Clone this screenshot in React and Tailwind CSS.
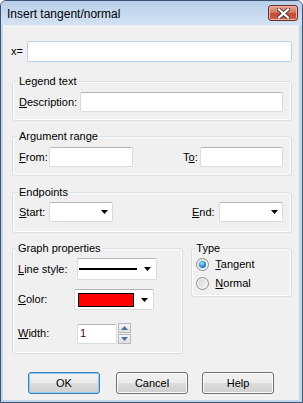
import React from "react";

const inputBox =
  "bg-white border border-[#d8dbe0] border-t-[#b3b6bd] rounded-[2px]";

function Arrow() {
  return (
    <svg width="7" height="4" viewBox="0 0 7 4" className="shrink-0">
      <polygon points="0,0 7,0 3.5,4" fill="#000" />
    </svg>
  );
}

function Combo({ className, children, arrowPad = "pr-[4px]" }) {
  return (
    <div className={`${inputBox} flex items-center ${arrowPad} ${className}`}>
      <div className="flex-1 flex items-center">{children}</div>
      <Arrow />
    </div>
  );
}

function Group({ title, className, children }) {
  return (
    <fieldset
      className={`border border-[#d5dfe5] rounded-[3px] shadow-[inset_0_0_0_1px_#ffffff] ${className}`}
    >
      <legend className="bg-[#f0f0f0] px-[1px] -ml-[1px] leading-[13px]">{title}</legend>
      {children}
    </fieldset>
  );
}

function Radio({ checked, children }) {
  return (
    <div className="flex items-center h-[13px]">
      <div className="w-[13px] h-[13px] rounded-full border border-[#8e8f8f] bg-[linear-gradient(135deg,#d2d2d2,#f8f8f8)] flex items-center justify-center shadow-[inset_0_0_0_1px_#f4f4f4]">
        {checked && (
          <div className="w-[7px] h-[7px] rounded-full bg-[radial-gradient(circle_at_40%_35%,#a6e4ff,#2c86c8_55%,#104a86)]" />
        )}
      </div>
      <span className="ml-[6px]">{children}</span>
    </div>
  );
}

function Button({ children, primary, className }) {
  return (
    <div
      className={`w-[72px] h-[22px] rounded-[3px] border flex items-center justify-center bg-[linear-gradient(#f2f2f2_0%,#ebebeb_50%,#dddddd_50%,#cfcfcf_100%)] ${
        primary
          ? "border-[#3c7fb1] shadow-[inset_0_0_0_1px_#8fd0f4]"
          : "border-[#707070] shadow-[inset_0_0_0_1px_#fbfbfb]"
      } ${className}`}
    >
      {children}
    </div>
  );
}

function SpinBtn({ up }) {
  return (
    <div className="w-[13px] h-[10px] border border-[#b5b8bd] bg-[linear-gradient(#f6f6f6,#dedede)] flex items-center justify-center">
      <svg width="7" height="4" viewBox="0 0 7 4">
        <polygon points={up ? "0,4 7,4 3.5,0" : "0,0 7,0 3.5,4"} fill="#4d6f9c" />
      </svg>
    </div>
  );
}

export default function App() {
  return (
    <div className="w-[303px] h-[403px] flex flex-col border border-[#3d5373] rounded-t-[6px] bg-[#c4d6ec] overflow-hidden font-['Liberation_Sans',Arial,sans-serif] text-[11px] leading-[13px] text-black">
      {/* Title bar */}
      <div className="h-[24px] flex items-start justify-between pl-[6px] pr-[4px] pt-[4px] bg-[linear-gradient(#b9cfe9,#d3e2f3)]">
        <span className="text-[12px] leading-[16px] mt-[1px]">Insert tangent/normal</span>
        <div className="w-[30px] h-[16px] rounded-[3px] border border-[#6e2a24] bg-[linear-gradient(#e8a796,#d27a66_45%,#c2492f_55%,#d0664e)] shadow-[inset_0_0_0_1px_#eeb3a6] flex items-center justify-center">
          <svg width="13" height="11" viewBox="0 0 13 11">
            <path d="M2 1.5 L11 9.5 M11 1.5 L2 9.5" stroke="#5a3a36" strokeWidth="4" strokeLinecap="square" />
            <path d="M2 1.5 L11 9.5 M11 1.5 L2 9.5" stroke="#ffffff" strokeWidth="2.2" strokeLinecap="square" />
          </svg>
        </div>
      </div>

      {/* Client area */}
      <div className="flex-1 ml-[2px] mr-[3px] mb-[2px] bg-[#f0f0f0] pl-[9px] pr-[7px] pt-[16px]">
        <div className="flex items-center h-[21px]">
          <span className="-ml-[1px]">x=</span>
          <div className="ml-auto w-[265px] h-[21px] bg-white border border-[#b7d0ec] rounded-[2px]" />
        </div>

        <Group title="Legend text" className="mt-[13px] pl-[6px] pr-[8px] pt-[4px] pb-[8px]">
          <div className="flex items-center">
            <span className="w-[61px]">
              <span className="underline">D</span>escription:
            </span>
            <div className={`${inputBox} w-[203px] h-[20px]`} />
          </div>
        </Group>

        <Group title="Argument range" className="mt-[9px] pl-[6px] pr-[8px] pt-[4px] pb-[8px]">
          <div className="flex items-center">
            <span className="w-[30px]">
              <span className="underline">F</span>rom:
            </span>
            <div className={`${inputBox} w-[84px] h-[20px]`} />
            <span className="ml-auto w-[17px]">
              T<span className="underline">o</span>:
            </span>
            <div className={`${inputBox} w-[83px] h-[20px]`} />
          </div>
        </Group>

        <Group title="Endpoints" className="mt-[10px] pl-[6px] pr-[8px] pt-[3px] pb-[10px]">
          <div className="flex items-center">
            <span className="w-[30px]">
              <span className="underline">S</span>tart:
            </span>
            <Combo className="w-[64px] h-[20px]" />
            <span className="ml-auto w-[27px]">
              <span className="underline">E</span>nd:
            </span>
            <Combo className="w-[64px] h-[20px]" />
          </div>
        </Group>

        <div className="flex items-start mt-[9px]">
          <Group title="Graph properties" className="w-[172px] pl-[5px] pt-[3px] pb-[9px]">
            <div className="flex items-center">
              <span className="w-[59px]">
                <span className="underline">L</span>ine style:
              </span>
              <Combo className="w-[80px] h-[22px]" arrowPad="pr-[5px]">
                <div className="ml-[1px] w-[58px] h-[2px] bg-black" />
              </Combo>
            </div>
            <div className="flex items-center mt-[9px]">
              <span className="w-[56px]">
                <span className="underline">C</span>olor:
              </span>
              <Combo className="w-[80px] h-[21px]" arrowPad="pr-[5px]">
                <div className="ml-[3px] w-[56px] h-[14px] bg-[#ff0000] border border-black" />
              </Combo>
            </div>
            <div className="flex items-center mt-[13px]">
              <span className="w-[59px]">
                <span className="underline">W</span>idth:
              </span>
              <div className={`${inputBox} w-[40px] h-[20px] flex items-center pl-[2px] text-[#3a0a38]`}>1</div>
              <div className="ml-[1px] flex flex-col gap-[1px]">
                <SpinBtn up />
                <SpinBtn />
              </div>
            </div>
          </Group>

          <Group title="Type" className="ml-[8px] w-[101px] pl-[4px] pt-[3px] pb-[6px]">
            <Radio checked>
              <span className="underline">T</span>angent
            </Radio>
            <div className="mt-[6px]">
              <Radio>
                <span className="underline">N</span>ormal
              </Radio>
            </div>
          </Group>
        </div>

        <div className="flex mt-[18px] ml-[16px]">
          <Button primary>OK</Button>
          <Button className="ml-[16px]">Cancel</Button>
          <Button className="ml-[14px]">Help</Button>
        </div>
      </div>
    </div>
  );
}
